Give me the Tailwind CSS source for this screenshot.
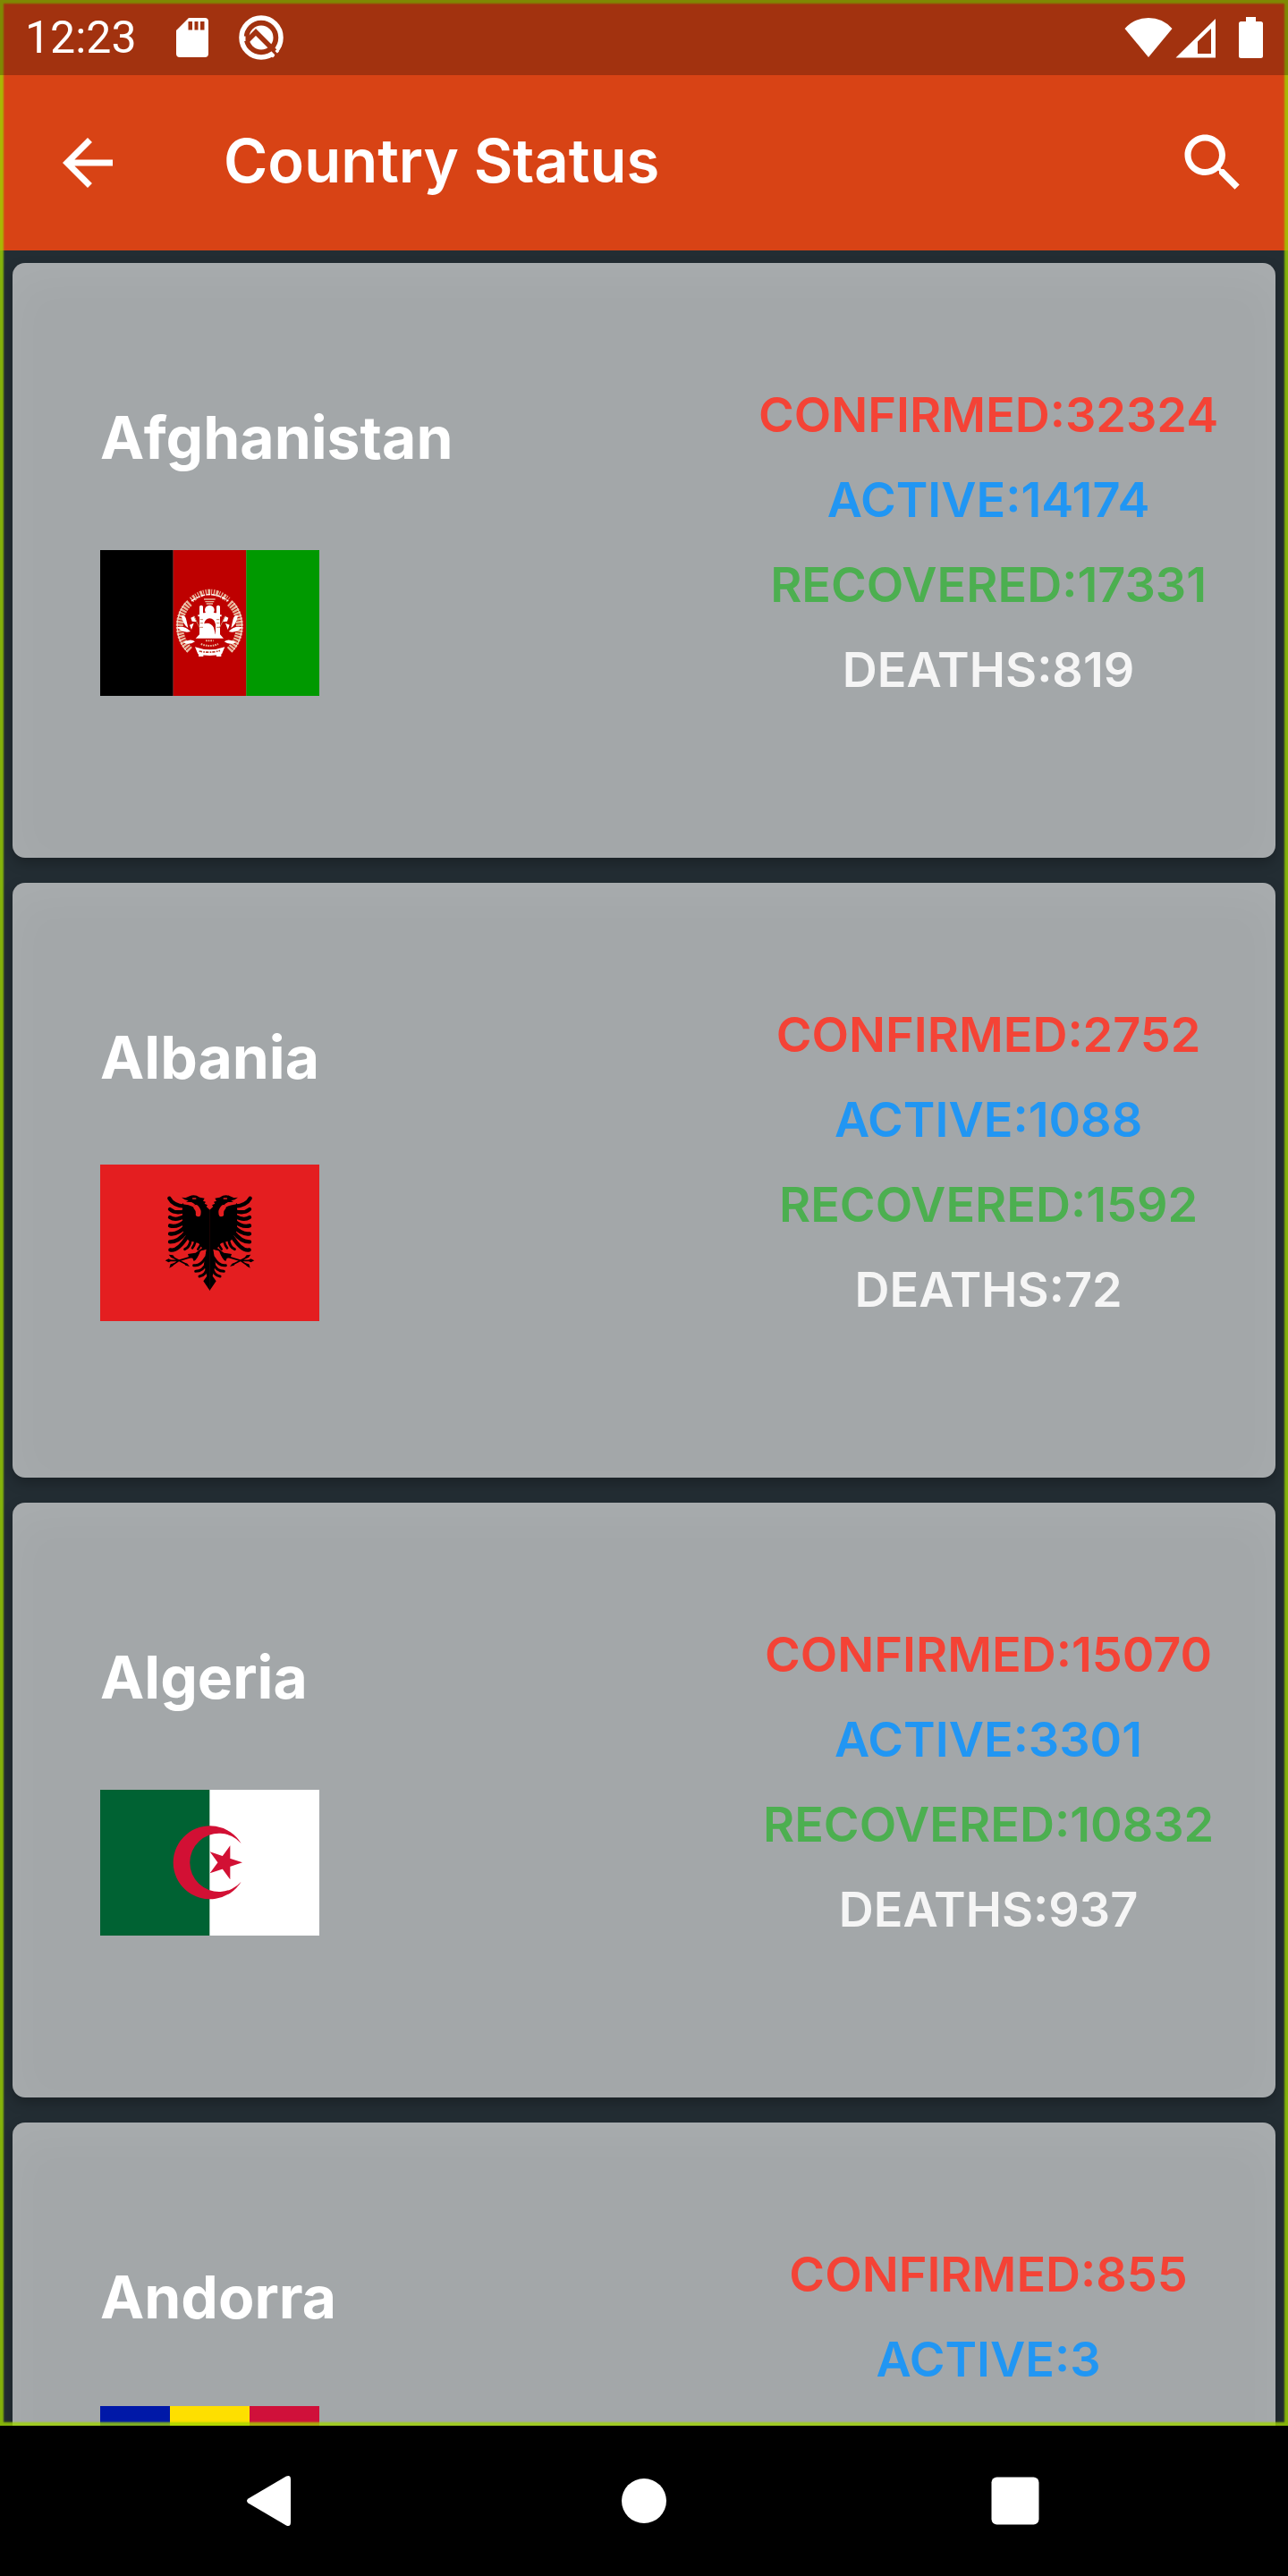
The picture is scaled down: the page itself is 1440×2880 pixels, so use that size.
<!DOCTYPE html>
<html lang="en">
<head>
<meta charset="utf-8">
<meta name="viewport" content="width=device-width, initial-scale=1">
<title>Country Status</title>
<script src="https://cdn.jsdelivr.net/npm/@tailwindcss/browser@4"></script>
</head>
<body class="bg-black">
<div class="flex h-screen flex-col overflow-hidden font-['Inter',sans-serif]">
  <div class="relative flex min-h-0 flex-1 flex-col overflow-hidden bg-[#232d33]">

    <header class="shrink-0 bg-[#d84315] text-white">
      <!-- status bar -->
      <div class="relative z-20 flex h-[84px] items-center bg-black/25 pr-7 pl-7">
        <span class="font-[Roboto,sans-serif] text-[50px] leading-[84px]">12:23</span>
        <svg class="ml-11 h-[46px] w-9" viewBox="0 0 36 46" fill="#fff" aria-hidden="true"><path fill-rule="evenodd" d="M14 1H32a4 4 0 0 1 4 4V41a4 4 0 0 1-4 4H4a4 4 0 0 1-4-4V15ZM13.500 5V14.500H18V5ZM20.500 5V14.500H24.500V5ZM27 5V14.500H31.500V5Z"/></svg>
        <svg class="ml-[34px] h-[50px] w-[50px]" viewBox="0 0 50 50" aria-hidden="true"><circle cx="25" cy="25" r="22" fill="none" stroke="#fff" stroke-width="5.500"/><circle cx="25" cy="25" r="13.500" fill="#fff"/><path d="M8 30 19 19 45 45" fill="none" stroke="#a23210" stroke-width="5.500"/><path d="M5 23.500V29" stroke="#fff" stroke-width="5"/><path d="M36.500 44 39 46.500M41.500 39 44 41.500" stroke="#fff" stroke-width="3"/></svg>
        <div class="ml-auto flex items-center">
          <svg class="h-[46px] w-[54px]" viewBox="0 0 54 46" fill="#fff" aria-hidden="true"><path d="M0.500 13Q11 1 27 1T53.500 13L27 45Z"/></svg>
          <svg class="ml-[3px] h-[46px] w-[46px]" viewBox="0 0 46 46" fill="#fff" aria-hidden="true"><path fill-rule="evenodd" d="M0.500 45.500 45 2V45.500ZM25 27.500V41H40V13Z"/></svg>
          <svg class="ml-6 h-[46px] w-7" viewBox="0 0 28 46" fill="#fff" aria-hidden="true"><path d="M9 0H20V5H25.500a2.500 2.500 0 0 1 2.500 2.500V43.500a2.500 2.500 0 0 1-2.500 2.500H3.500a2.500 2.500 0 0 1-2.500-2.500V7.500A2.500 2.500 0 0 1 3.500 5H9Z"/></svg>
        </div>
      </div>
      <!-- app bar -->
      <div class="flex h-[196px] items-center pr-[42px] pl-14">
        <button type="button" aria-label="Back"><svg class="block h-[84px] w-[84px]" viewBox="0 0 24 24" fill="#fff"><path d="M20 11H7.830l5.590-5.590L12 4l-8 8 8 8 1.410-1.410L7.830 13H20v-2z"/></svg></button>
        <h1 class="ml-[110px] pb-1 text-[67px] leading-[80px] font-semibold whitespace-nowrap">Country Status</h1>
        <button type="button" aria-label="Search" class="ml-auto"><svg class="block h-[84px] w-[84px]" viewBox="0 0 24 24" fill="#fff"><path d="M15.500 14h-.790l-.280-.270C15.410 12.590 16 11.110 16 9.500 16 5.910 13.090 3 9.500 3S3 5.910 3 9.500 5.910 16 9.500 16c1.610 0 3.090-.590 4.230-1.570l.270.280v.790l5 4.990L20.490 19l-4.990-5zm-6 0C7.010 14 5 11.990 5 9.500S7.010 5 9.500 5 14 7.010 14 9.500 11.990 14 9.500 14z"/></svg></button>
      </div>
    </header>

    <main class="min-h-0 flex-1 overflow-hidden p-[14px]">
      <ul class="flex flex-col gap-7">

        <li class="grid grid-cols-[6fr_5fr] items-start rounded-[14px] bg-[#a3a7a9] pt-[134px] pb-[175px] shadow-[inset_0_16px_48px_rgba(255,255,255,0.07),0_6px_14px_rgba(0,0,0,0.25)]">
          <div class="flex flex-col gap-20 pt-[21px] pl-[98px]">
            <h2 class="text-[66px] leading-[80px] font-bold text-white">Afghanistan</h2>
            <div class="flex h-[175px] items-center">
              <svg class="h-[163px] w-[245px]" viewBox="66 585 735 489" role="img" aria-label="Flag of Afghanistan">
                <path fill="#000" d="M66 585H311V1074H66z"/><path fill="#be0000" d="M311 585H556V1074H311z"/><path fill="#009900" d="M556 585H801V1074H556z"/>
                <g fill="none" stroke="#e9b79c">
                  <path d="M366 762C322 800 320 878 368 922" stroke-width="24" stroke-dasharray="7 3"/>
                  <path d="M500 762C544 800 546 878 498 922" stroke-width="24" stroke-dasharray="7 3"/>
                  <path d="M356 758C314 802 314 878 358 926M510 758C552 802 552 878 508 926" stroke="#f6ded0" stroke-width="3"/>
                  <path d="M372 752Q433 700 496 752" stroke-width="20" stroke-dasharray="4 4 8 3 3 5"/>
                  <path d="M372 756Q433 712 496 756" stroke="#fff" stroke-width="4" stroke-dasharray="14 4"/>
                  <path d="M414 750H452M418 758H448M422 765H444" stroke-width="4"/>
                  <path d="M404 900Q433 912 462 900M420 889H446" stroke-width="6" stroke-dasharray="5 3"/>
                </g>
                <g fill="#fff">
                  <path d="M338 804Q352 802 355 820L361 846Q344 836 338 804ZM528 804Q514 802 511 820L505 846Q522 836 528 804ZM324 844Q350 838 369 858Q346 866 324 844ZM542 844Q516 838 497 858Q520 866 542 844ZM345 894Q370 880 384 892Q362 906 345 894ZM521 894Q496 880 482 892Q504 906 521 894Z"/>
                  <path d="M384 910Q433 928 484 910L474 934Q433 944 394 934ZM396 934H412V942H396ZM456 934H472V942H456Z"/>
                  <circle cx="433" cy="786" r="16"/>
                  <path fill-rule="evenodd" d="M399 774Q405 766 411 774V796H416Q433 790 451 796H456V774Q462 766 468 774V802H473V808H468V868L480 881H386L399 868V808H394V802H399ZM414 868H453V834Q449 814 433 814Q418 814 414 834Z"/>
                  <path d="M414 832Q436 826 447 845L453 870H414ZM370 812 382 806 390 826 374 824ZM366 836 380 830 372 852ZM496 812 484 806 476 826 492 824ZM500 836 486 830 494 852Z"/>
                </g>
                <path d="M380 806 400 846M486 806 466 846M401 818H411M401 830H411M401 844H411M456 818H466M456 830H466M456 844H466" stroke="#c98468" stroke-width="3"/>
                <path d="M398 924Q433 932 468 922" fill="none" stroke="#be3a2a" stroke-width="5" stroke-dasharray="10 4 5 3"/>
              </svg>
            </div>
          </div>
          <div class="flex flex-col gap-6 text-center text-[54px] leading-[71px] font-semibold whitespace-nowrap">
            <p class="text-[#f44336]">CONFIRMED:32324</p>
            <p class="text-[#2196f3]">ACTIVE:14174</p>
            <p class="text-[#4caf50]">RECOVERED:17331</p>
            <p class="text-[#f5f5f5]">DEATHS:819</p>
          </div>
        </li>

        <li class="grid grid-cols-[6fr_5fr] items-start rounded-[14px] bg-[#a3a7a9] pt-[134px] pb-[175px] shadow-[inset_0_16px_48px_rgba(255,255,255,0.07),0_6px_14px_rgba(0,0,0,0.25)]">
          <div class="flex flex-col gap-20 pt-[21px] pl-[98px]">
            <h2 class="text-[66px] leading-[80px] font-bold text-white">Albania</h2>
            <div class="flex h-[175px] items-center">
              <svg class="h-[175px] w-[245px]" viewBox="36 66 735 525" role="img" aria-label="Flag of Albania">
                <path fill="#e41e20" d="M36 66H771V591H36z"/>
                <defs>
                  <g id="half-eagle">
                    <path d="M404 218 392 207 396 202 386 197 390 191 381 188 386 179 370 176Q352 164 336 172L322 178 309 176 320 184 332 187 324 191 342 192Q352 196 358 204L312 196V285L332 320 366 330 378 346 356 362 330 366 334 378 346 380 350 390Q362 384 372 356L392 350 384 400 394 440 382 457 404 489Z"/>
                    <g fill="none" stroke="#000" stroke-width="13" stroke-linecap="round">
                      <path d="M268 179Q280 202 318 206"/><path d="M270 216Q288 232 320 222"/><path d="M270 243Q290 256 320 238"/><path d="M270 271Q294 278 320 256"/><path d="M270 298Q296 302 322 274"/><path d="M270 325Q298 326 324 292"/><path d="M271 352Q296 358 328 308"/>
                      <path d="M320 350Q336 344 340 318" stroke-width="9"/><path d="M345 346Q352 338 356 322" stroke-width="8"/><path d="M364 350 374 334" stroke-width="8"/>
                      <path d="M350 404Q372 408 390 378" stroke-width="9"/><path d="M356 424Q382 424 392 396" stroke-width="9"/><path d="M369 441Q390 438 396 410" stroke-width="9"/>
                      <path d="M262 388H300L340 376M274 374 328 402M274 406 300 388" stroke-width="5"/>
                    </g>
                    <path d="M254 388 266 382 276 388 266 394ZM266 368 280 370 288 380 274 378ZM268 413 272 400 286 396 280 406ZM336 408 322 404 318 396 328 398Z"/>
                    <g fill="none" stroke="#e41e20" stroke-linecap="round">
                      <path d="M318 196Q350 200 364 216" stroke-width="7"/><path d="M358 210Q368 220 365 232" stroke-width="17"/>
                      <path d="M347 180H356" stroke-width="5"/><path d="M381 362 370 382" stroke-width="16"/>
                    </g>
                  </g>
                </defs>
                <use href="#half-eagle"/><use href="#half-eagle" transform="matrix(-1 0 0 1 807 0)"/>
              </svg>
            </div>
          </div>
          <div class="flex flex-col gap-6 text-center text-[54px] leading-[71px] font-semibold whitespace-nowrap">
            <p class="text-[#f44336]">CONFIRMED:2752</p>
            <p class="text-[#2196f3]">ACTIVE:1088</p>
            <p class="text-[#4caf50]">RECOVERED:1592</p>
            <p class="text-[#f5f5f5]">DEATHS:72</p>
          </div>
        </li>

        <li class="grid grid-cols-[6fr_5fr] items-start rounded-[14px] bg-[#a3a7a9] pt-[134px] pb-[175px] shadow-[inset_0_16px_48px_rgba(255,255,255,0.07),0_6px_14px_rgba(0,0,0,0.25)]">
          <div class="flex flex-col gap-20 pt-[21px] pl-[98px]">
            <h2 class="text-[66px] leading-[80px] font-bold text-white">Algeria</h2>
            <div class="flex h-[175px] items-center">
              <svg class="h-[163px] w-[245px]" viewBox="36 63 735 489" role="img" aria-label="Flag of Algeria">
                <path fill="#fff" d="M36 63H771V552H36z"/><path fill="#006233" d="M36 63H403V552H36z"/>
                <path fill="#d21034" d="M509 243A123 123 0 1 0 509 371A98 98 0 1 1 509 243ZM513 307 404 343 472 250V364L404 271Z"/>
              </svg>
            </div>
          </div>
          <div class="flex flex-col gap-6 text-center text-[54px] leading-[71px] font-semibold whitespace-nowrap">
            <p class="text-[#f44336]">CONFIRMED:15070</p>
            <p class="text-[#2196f3]">ACTIVE:3301</p>
            <p class="text-[#4caf50]">RECOVERED:10832</p>
            <p class="text-[#f5f5f5]">DEATHS:937</p>
          </div>
        </li>

        <li class="grid grid-cols-[6fr_5fr] items-start rounded-[14px] bg-[#a3a7a9] pt-[134px] pb-[175px] shadow-[inset_0_16px_48px_rgba(255,255,255,0.07),0_6px_14px_rgba(0,0,0,0.25)]">
          <div class="flex flex-col gap-20 pt-[21px] pl-[98px]">
            <h2 class="text-[66px] leading-[80px] font-bold text-white">Andorra</h2>
            <div class="flex h-[175px] items-center">
              <svg class="h-[171px] w-[245px]" viewBox="0 0 245 171" role="img" aria-label="Flag of Andorra">
                <path fill="#0018a8" d="M0 0H78V171H0z"/><path fill="#fedf00" d="M78 0H167V171H78z"/><path fill="#d0103a" d="M167 0H245V171H167z"/>
              </svg>
            </div>
          </div>
          <div class="flex flex-col gap-6 text-center text-[54px] leading-[71px] font-semibold whitespace-nowrap">
            <p class="text-[#f44336]">CONFIRMED:855</p>
            <p class="text-[#2196f3]">ACTIVE:3</p>
          </div>
        </li>
      </ul>
    </main>

    <!-- green focus frame around the app window -->
    <div class="pointer-events-none absolute inset-0 z-10 shadow-[inset_0_0_2px_4px_rgba(157,212,0,0.8)]"></div>
  </div>

  <!-- system navigation -->
  <nav class="flex h-[168px] shrink-0 items-center justify-center gap-[331px] bg-black">
    <button type="button" aria-label="Back"><svg class="block h-[84px] w-[84px]" viewBox="0 0 84 84" fill="#fff"><path d="M14.500 39.500 57 14.500Q62 12.500 62 18V66Q62 71.500 57 69.500L14.500 44.500Q11.500 42 14.500 39.500Z"/></svg></button>
    <button type="button" aria-label="Home"><svg class="block h-[84px] w-[84px]" viewBox="0 0 84 84" fill="#fff"><circle cx="42" cy="42" r="25"/></svg></button>
    <button type="button" aria-label="Overview"><svg class="block h-[84px] w-[84px]" viewBox="0 0 84 84" fill="#fff"><rect x="15.500" y="15.500" width="53" height="53" rx="6"/></svg></button>
  </nav>
</div>
</body>
</html>
